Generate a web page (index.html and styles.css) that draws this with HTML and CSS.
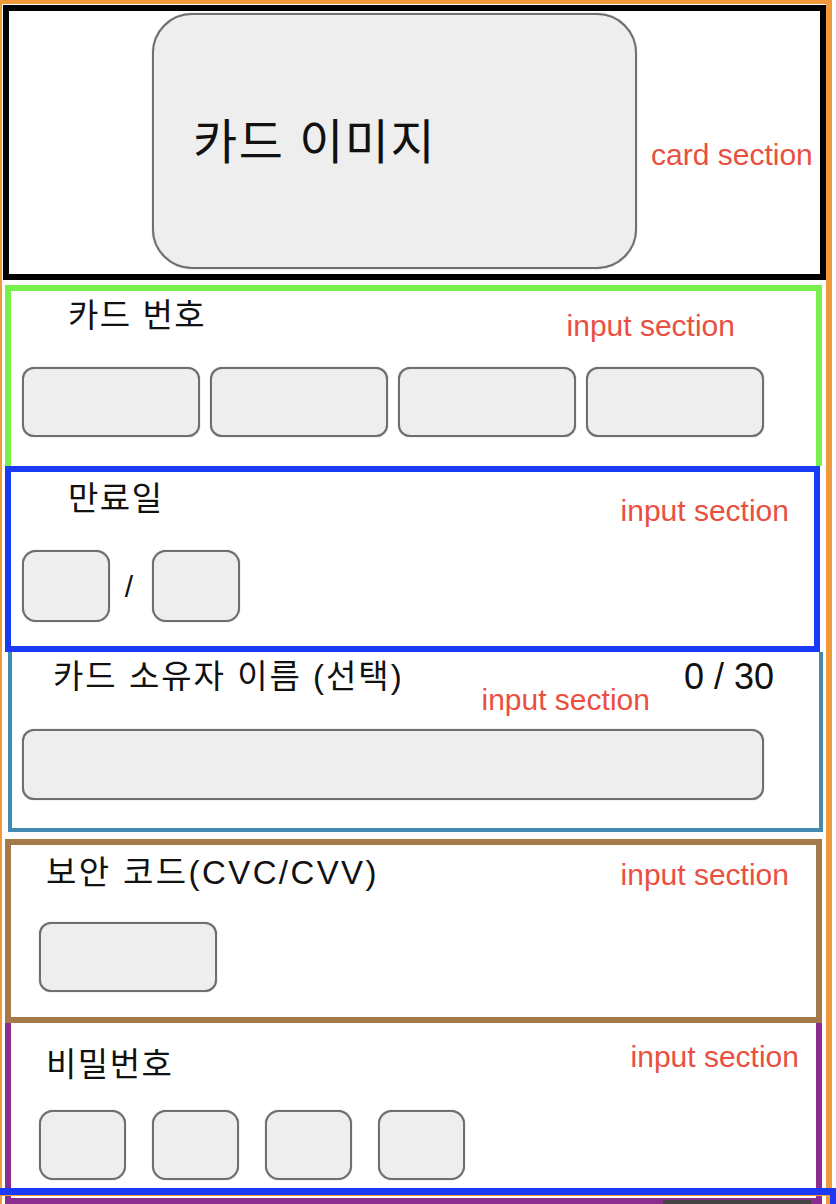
FILE: index.html
```html
<!DOCTYPE html>
<html>
<head>
  <meta charset="utf-8">
  <link rel="stylesheet" href="styles.css">
</head>
<body>
  <div class="page">
    <div class="frame">

      <div class="card-section">
        <div class="card-image">카드 이미지</div>
        <div class="note note-card">card section</div>
      </div>

      <div class="section section-number">
        <div class="head">
          <div class="label">카드 번호</div>
          <div class="note">input section</div>
        </div>
        <div class="fields">
          <div class="field field-wide"></div>
          <div class="field field-wide"></div>
          <div class="field field-wide"></div>
          <div class="field field-wide"></div>
        </div>
      </div>

      <div class="section section-expiry">
        <div class="head">
          <div class="label">만료일</div>
          <div class="note">input section</div>
        </div>
        <div class="fields">
          <div class="field field-small"></div>
          <div class="slash">/</div>
          <div class="field field-small"></div>
        </div>
      </div>

      <div class="section section-owner">
        <div class="head">
          <div class="label">카드 소유자 이름 (선택)</div>
          <div class="note">input section</div>
          <div class="count">0 / 30</div>
        </div>
        <div class="fields">
          <div class="field field-full"></div>
        </div>
      </div>

      <div class="section section-cvc">
        <div class="head">
          <div class="label">보안 코드(CVC/CVV)</div>
          <div class="note">input section</div>
        </div>
        <div class="fields">
          <div class="field field-wide"></div>
        </div>
      </div>

      <div class="section section-password">
        <div class="head">
          <div class="label">비밀번호</div>
          <div class="note">input section</div>
        </div>
        <div class="fields">
          <div class="field field-pin"></div>
          <div class="field field-pin"></div>
          <div class="field field-pin"></div>
          <div class="field field-pin"></div>
        </div>
      </div>

    </div>

    <div class="tail">
      <div class="tail-rule"></div>
      <div class="tail-bar"></div>
    </div>
  </div>
</body>
</html>
```

FILE: styles.css
```css
* {
  margin: 0;
  padding: 0;
  box-sizing: border-box;
}

body {
  width: 836px;
  height: 1204px;
  overflow: hidden;
  background: white;
  font-family: 'Liberation Sans', 'Noto Sans CJK KR', sans-serif;
  color: #111;
}

.page {
  width: 836px;
}

.frame {
  width: 832px;
  height: 1204px;
  border-top: 4px solid #f09a3b;
  border-left: 2px solid #f09a3b;
  border-right: 6px solid #f09a3b;
}

/* card section */

.card-section {
  width: 823px;
  height: 275px;
  margin: 1px 0 0 1px;
  border: 6px solid #000;
  display: flex;
  align-items: flex-start;
}

.card-image {
  width: 485px;
  height: 256px;
  margin: 2px 0 0 143px;
  padding: 0 0 6px 39px;
  display: flex;
  align-items: center;
  background: #eeeeee;
  border: 2px solid #707070;
  border-radius: 40px;
  box-shadow: 0 0 1px rgba(0, 0, 0, 0.5);
  font-size: 48px;
  letter-spacing: 1.5px;
  color: #111;
}

.note {
  font-family: 'Liberation Sans', sans-serif;
  font-size: 30px;
  line-height: 36px;
  color: #e9503f;
  white-space: nowrap;
}

.note-card {
  margin: 126px 0 0 14px;
}

/* input sections */

.section {
  display: flex;
  flex-direction: column;
}

.head {
  display: flex;
  align-items: flex-start;
}

.label {
  font-size: 33px;
  line-height: 38px;
  letter-spacing: 1.5px;
  white-space: nowrap;
}

.head .note {
  margin-left: auto;
}

.fields {
  display: flex;
  align-items: center;
}

.field {
  background: #eeeeee;
  border: 2px solid #6f6f6f;
  border-radius: 12px;
  box-shadow: 0 0 1px rgba(0, 0, 0, 0.5);
  flex-shrink: 0;
}

.field-wide {
  width: 178px;
  height: 70px;
}

.field-small {
  width: 88px;
  height: 72px;
  border-radius: 14px;
}

.field-full {
  width: 742px;
  height: 71px;
}

.field-pin {
  width: 87px;
  height: 70px;
  border-radius: 14px;
}

.slash {
  width: 42px;
  text-align: center;
  font-size: 30px;
  padding: 2px 4px 0 0;
}

.section-number {
  width: 817px;
  height: 181px;
  margin: 5px 0 0 3px;
  border: 6px solid #78f04a;
  border-bottom: 0;
  padding: 6px 0 0 11px;
}

.section-number .label {
  margin-left: 46px;
}

.section-number .note {
  margin-top: 11px;
  margin-right: 81px;
}

.section-number .fields {
  margin-top: 23px;
  gap: 10px;
}

.section-expiry {
  width: 815px;
  height: 186px;
  margin-left: 3px;
  border: 6px solid #1a3af5;
  padding: 8px 0 0 11px;
}

.section-expiry .label {
  margin-left: 46px;
}

.section-expiry .note {
  margin-top: 13px;
  margin-right: 25px;
}

.section-expiry .fields {
  margin-top: 21px;
}

.section-owner {
  width: 815px;
  height: 180px;
  margin-left: 6px;
  border: 4px solid #428aaf;
  border-top: 0;
  padding: 6px 0 0 10px;
}

.section-owner .label {
  margin-left: 31px;
  letter-spacing: 2px;
}

.section-owner .note {
  margin-top: 24px;
  margin-right: 34px;
}

.count {
  font-size: 36px;
  line-height: 38px;
  margin-right: 45px;
  white-space: nowrap;
}

.section-owner .fields {
  margin-top: 11px;
}

.section-cvc {
  width: 817px;
  height: 184px;
  margin: 7px 0 0 3px;
  border: 6px solid #a57a4b;
  padding: 9px 0 0 28px;
}

.section-cvc .label {
  margin-left: 7px;
  letter-spacing: 2.4px;
}

.section-cvc .note {
  margin-top: 3px;
  margin-right: 27px;
}

.section-cvc .fields {
  margin-top: 29px;
}

.section-password {
  width: 817px;
  height: 181px;
  margin-left: 3px;
  border: 6px solid #8a2d8e;
  border-top: 0;
  padding: 16px 0 0 28px;
}

.section-password .label {
  margin: 7px 0 0 7px;
}

.section-password .note {
  margin-right: 17px;
}

.section-password .fields {
  margin-top: 26px;
  gap: 26px;
}

/* next section peeking in at the bottom */

.tail {
  position: relative;
  z-index: 1;
  width: 836px;
  height: 16px;
  margin-top: -16px;
  border-top: 7px solid #1a3af5;
  border-right: 6px solid #1a3af5;
}

.tail-rule {
  height: 1px;
  background: #f09a3b;
}

.tail-bar {
  width: 148px;
  height: 4px;
  margin: 4px 0 0 663px;
  background: #444;
}
```
